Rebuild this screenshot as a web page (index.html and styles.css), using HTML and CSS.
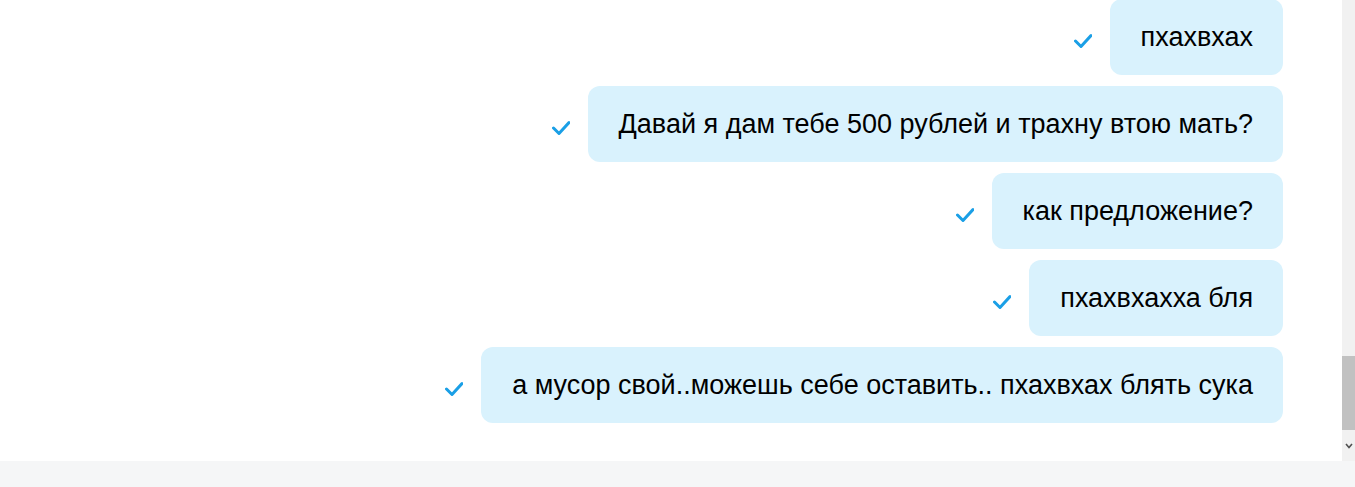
FILE: index.html
```html
<!DOCTYPE html>
<html lang="ru">
<head>
<meta charset="utf-8">
<title>Chat</title>
<link rel="stylesheet" href="styles.css">
</head>
<body>
<div class="page">
  <div class="main">
    <div class="messages">
      <div class="row">
        <svg class="check" viewBox="0 0 18 16" width="18" height="16"><polyline points="1.5,8 7,13.5 17,2.5"/></svg>
        <div class="bubble">пхахвхах</div>
      </div>
      <div class="row">
        <svg class="check" viewBox="0 0 18 16" width="18" height="16"><polyline points="1.5,8 7,13.5 17,2.5"/></svg>
        <div class="bubble">Давай я дам тебе 500 рублей и трахну втою мать?</div>
      </div>
      <div class="row">
        <svg class="check" viewBox="0 0 18 16" width="18" height="16"><polyline points="1.5,8 7,13.5 17,2.5"/></svg>
        <div class="bubble">как предложение?</div>
      </div>
      <div class="row">
        <svg class="check" viewBox="0 0 18 16" width="18" height="16"><polyline points="1.5,8 7,13.5 17,2.5"/></svg>
        <div class="bubble">пхахвхахха бля</div>
      </div>
      <div class="row">
        <svg class="check" viewBox="0 0 18 16" width="18" height="16"><polyline points="1.5,8 7,13.5 17,2.5"/></svg>
        <div class="bubble">а мусор свой..можешь себе оставить.. пхахвхах блять сука</div>
      </div>
    </div>
    <div class="scrollbar">
      <div class="thumb"></div>
      <div class="arrow">
        <svg viewBox="0 0 8 6" width="8" height="6"><polyline points="1,1 4,4.5 7,1"/></svg>
      </div>
    </div>
  </div>
  <div class="footer"></div>
</div>
</body>
</html>
```

FILE: styles.css
```css
* { box-sizing: border-box; }
html, body {
  margin: 0;
  padding: 0;
  height: 100%;
  overflow: hidden;
  background: #ffffff;
}
body {
  font-family: "Liberation Sans", Arial, sans-serif;
  color: #000;
}
.page {
  display: flex;
  flex-direction: column;
  height: 487px;
}
.main {
  display: flex;
  height: 461px;
  background: #ffffff;
}
.messages {
  flex: 1;
  display: flex;
  flex-direction: column;
  justify-content: flex-end;
  gap: 11px;
  overflow: hidden;
  padding: 0 59px 38px 0;
}
.row {
  display: flex;
  justify-content: flex-end;
  align-items: center;
  gap: 18px;
  flex-shrink: 0;
}
.check {
  margin-top: 8px;
  fill: none;
  stroke: #1a9fe6;
  stroke-width: 3;
  stroke-linecap: round;
  stroke-linejoin: round;
}
.bubble {
  background: #d9f2fd;
  border-radius: 12px;
  height: 76px;
  padding: 0 30px 0 31px;
  display: flex;
  align-items: center;
  font-size: 27px;
  line-height: 32px;
  white-space: nowrap;
}
.scrollbar {
  width: 13px;
  background: #f1f1f1;
  display: flex;
  flex-direction: column;
  justify-content: flex-end;
}
.thumb {
  height: 74px;
  background: #c1c1c1;
}
.arrow {
  height: 31px;
  display: flex;
  justify-content: center;
  align-items: center;
}
.arrow svg {
  fill: none;
  stroke: #505050;
  stroke-width: 1.6;
}
.footer {
  height: 26px;
  background: #f5f6f7;
}
```
